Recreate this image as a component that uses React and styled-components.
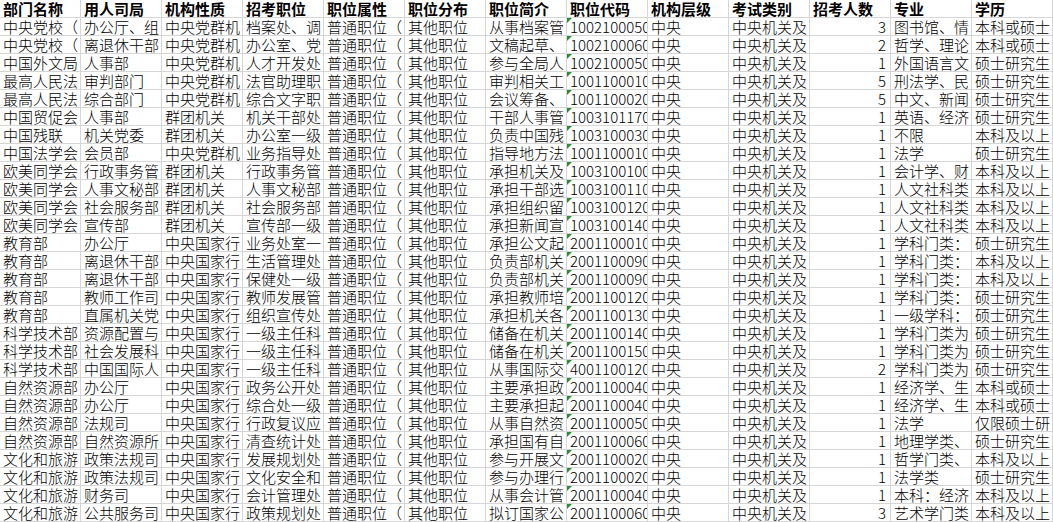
import React from "react";
import styled, { createGlobalStyle } from "styled-components";

const GlobalStyle = createGlobalStyle`
  html, body {
    margin: 0;
    padding: 0;
    background: #ffffff;
    overflow: hidden;
  }
  body {
    font-family: "Noto Sans CJK SC", "Noto Sans", sans-serif;
  }
`;

const Sheet = styled.div`
  display: grid;
  grid-template-columns: repeat(13, 81px);
  grid-auto-rows: 18px;
  width: 1053px;
  height: 522px;
  overflow: hidden;
  background: #ffffff;
`;

const Cell = styled.div`
  position: relative;
  box-sizing: border-box;
  height: 18px;
  border-right: 1px solid #d6d6d6;
  border-bottom: 1px solid #d6d6d6;
  padding: 0 ${(p) => (p.$num ? "4px" : "0")} 0 ${(p) => (p.$num ? "0" : "3px")};
  font-family: "Noto Sans CJK SC", sans-serif;
  font-size: 15px;
  font-weight: ${(p) => (p.$head ? 700 : 300)};
  line-height: 17px;
  color: #000000;
  text-align: ${(p) => (p.$num ? "right" : "left")};
  white-space: nowrap;
  overflow: hidden;

  ${(p) =>
    p.$flag &&
    `
    &::before {
      content: "";
      position: absolute;
      left: 0;
      top: 0;
      width: 0;
      height: 0;
      border-top: 5px solid #2e8b3a;
      border-right: 5px solid transparent;
    }
  `}
`;

const headers = [
  "部门名称",
  "用人司局",
  "机构性质",
  "招考职位",
  "职位属性",
  "职位分布",
  "职位简介",
  "职位代码",
  "机构层级",
  "考试类别",
  "招考人数",
  "专业",
  "学历",
];

const Q = "中央党群机";
const T = "群团机关";
const G = "中央国家行";

const rows = [
  ["中央党校（", "办公厅、组", Q, "档案处、调", "从事档案管", "100210005001", 3, "图书馆、情", "本科或硕士"],
  ["中央党校（", "离退休干部", Q, "办公室、党", "文稿起草、", "100210006001", 2, "哲学、理论", "本科或硕士"],
  ["中国外文局", "人事部", Q, "人才开发处", "参与全局人", "100210005001", 1, "外国语言文", "硕士研究生"],
  ["最高人民法", "审判部门", Q, "法官助理职", "审判相关工", "100110001001", 5, "刑法学、民", "硕士研究生"],
  ["最高人民法", "综合部门", Q, "综合文字职", "会议筹备、", "100110002001", 5, "中文、新闻", "硕士研究生"],
  ["中国贸促会", "人事部", T, "机关干部处", "干部人事管", "100310117001", 1, "英语、经济", "硕士研究生"],
  ["中国残联", "机关党委", T, "办公室一级", "负责中国残", "100310003001", 1, "不限", "本科及以上"],
  ["中国法学会", "会员部", Q, "业务指导处", "指导地方法", "100110001001", 1, "法学", "硕士研究生"],
  ["欧美同学会", "行政事务管", T, "行政事务管", "承担机关及", "100310010001", 1, "会计学、财", "本科及以上"],
  ["欧美同学会", "人事文秘部", T, "人事文秘部", "承担干部选", "100310011001", 1, "人文社科类", "本科及以上"],
  ["欧美同学会", "社会服务部", T, "社会服务部", "承担组织留", "100310012001", 1, "人文社科类", "本科及以上"],
  ["欧美同学会", "宣传部", T, "宣传部一级", "承担新闻宣", "100310014001", 1, "人文社科类", "本科及以上"],
  ["教育部", "办公厅", G, "业务处室一", "承担公文起", "200110001001", 1, "学科门类：", "硕士研究生"],
  ["教育部", "离退休干部", G, "生活管理处", "负责部机关", "200110009001", 1, "学科门类：", "本科及以上"],
  ["教育部", "离退休干部", G, "保健处一级", "负责部机关", "200110009002", 1, "学科门类：", "本科及以上"],
  ["教育部", "教师工作司", G, "教师发展管", "承担教师培", "200110012001", 1, "学科门类：", "硕士研究生"],
  ["教育部", "直属机关党", G, "组织宣传处", "承担机关各", "200110013001", 1, "一级学科：", "硕士研究生"],
  ["科学技术部", "资源配置与", G, "一级主任科", "储备在机关", "200110014001", 1, "学科门类为", "硕士研究生"],
  ["科学技术部", "社会发展科", G, "一级主任科", "储备在机关", "200110015001", 1, "学科门类为", "硕士研究生"],
  ["科学技术部", "中国国际人", G, "一级主任科", "从事国际交", "400110012001", 2, "学科门类为", "硕士研究生"],
  ["自然资源部", "办公厅", G, "政务公开处", "主要承担政", "200110004001", 1, "经济学、生", "本科或硕士"],
  ["自然资源部", "办公厅", G, "综合处一级", "主要承担起", "200110004002", 1, "经济学、生", "本科或硕士"],
  ["自然资源部", "法规司", G, "行政复议应", "从事自然资", "200110005001", 1, "法学", "仅限硕士研"],
  ["自然资源部", "自然资源所", G, "清查统计处", "承担国有自", "200110006001", 1, "地理学类、", "硕士研究生"],
  ["文化和旅游", "政策法规司", G, "发展规划处", "参与开展文", "200110002001", 1, "哲学门类、", "本科及以上"],
  ["文化和旅游", "政策法规司", G, "文化安全和", "参与办理行", "200110002002", 1, "法学类", "硕士研究生"],
  ["文化和旅游", "财务司", G, "会计管理处", "从事会计管", "200110004001", 1, "本科：经济", "本科及以上"],
  ["文化和旅游", "公共服务司", G, "政策规划处", "拟订国家公", "200110006001", 3, "艺术学门类", "本科及以上"],
];

function DataRow({ row }) {
  const [dept, bureau, nature, post, intro, code, count, major, edu] = row;
  return (
    <>
      <Cell>{dept}</Cell>
      <Cell>{bureau}</Cell>
      <Cell>{nature}</Cell>
      <Cell>{post}</Cell>
      <Cell>普通职位（</Cell>
      <Cell>其他职位</Cell>
      <Cell>{intro}</Cell>
      <Cell $flag>{code}</Cell>
      <Cell>中央</Cell>
      <Cell>中央机关及</Cell>
      <Cell $num>{count}</Cell>
      <Cell>{major}</Cell>
      <Cell>{edu}</Cell>
    </>
  );
}

export default function App() {
  return (
    <>
      <GlobalStyle />
      <Sheet>
        {headers.map((h) => (
          <Cell key={h} $head>
            {h}
          </Cell>
        ))}
        {rows.map((r, i) => (
          <DataRow key={i} row={r} />
        ))}
      </Sheet>
    </>
  );
}
